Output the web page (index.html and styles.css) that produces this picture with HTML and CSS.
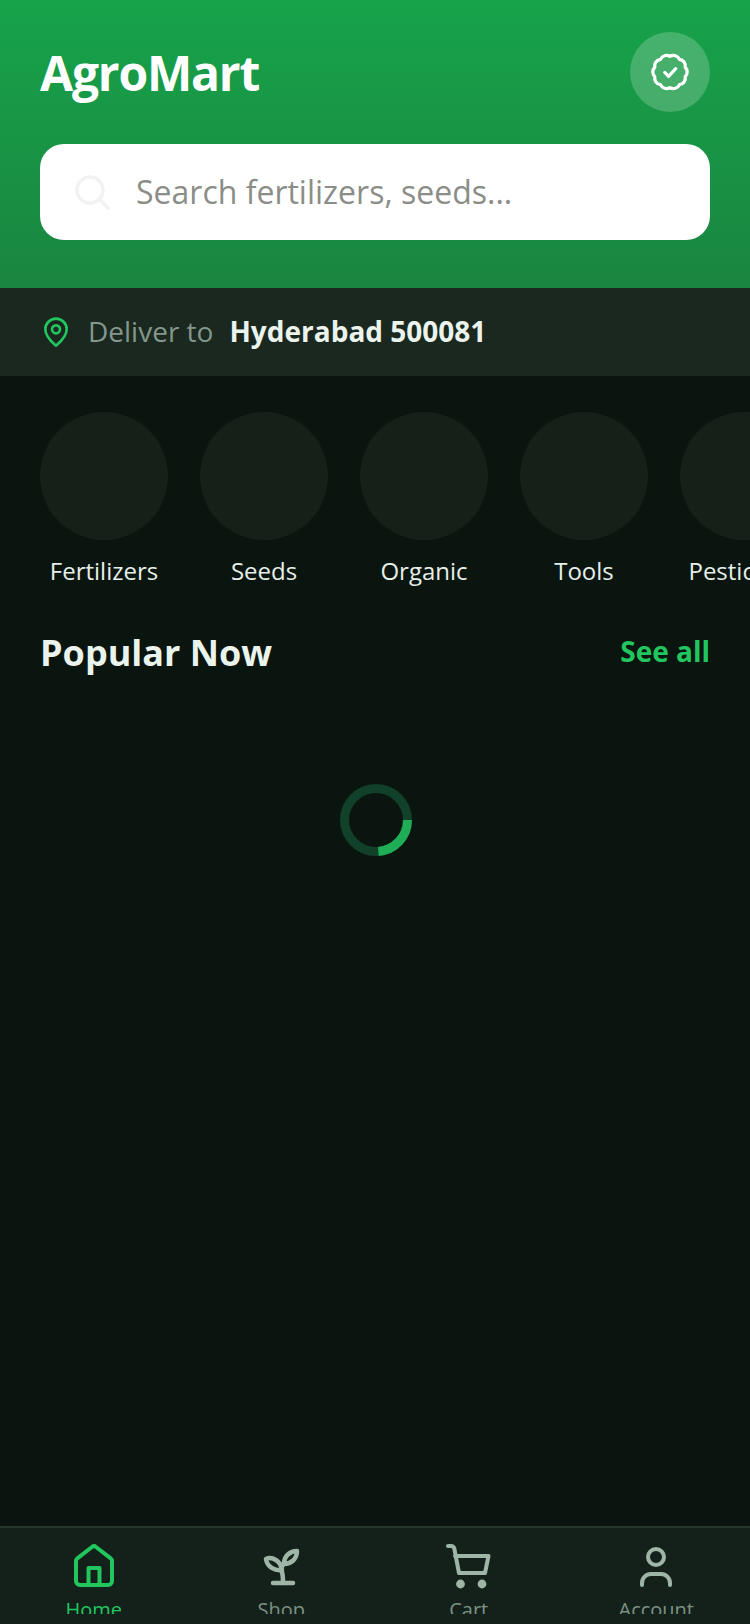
FILE: index.html
```html
<!DOCTYPE html>
<html lang="en">
<head>
  <meta charset="UTF-8" />
  <meta name="viewport" content="width=device-width, initial-scale=1.0" />
  <title>AgroMart</title>
  <link rel="stylesheet" href="styles.css">
</head>
<body>
  <div class="app">
    <!-- Header -->
    <div class="header">
      <div class="header-top">
        <div class="logo">AgroMart</div>
        <div class="badge-btn">
          <svg class="badge-icon" viewBox="0 0 40 40" fill="none" stroke="#fff" stroke-width="3.4" stroke-linecap="round" stroke-linejoin="round">
            <path d="M20 3.5A7 7 0 0 1 30 6.7A7 7 0 0 1 36 15A7 7 0 0 1 36 25A7 7 0 0 1 30 33.3A7 7 0 0 1 20 36.5A7 7 0 0 1 10 33.3A7 7 0 0 1 4 25A7 7 0 0 1 4 15A7 7 0 0 1 10 6.7A7 7 0 0 1 20 3.5Z" />
            <path d="M14.5 20.5l4 4 7.5-8" />
          </svg>
        </div>
      </div>
      <div class="search-box">
        <svg class="search-icon" viewBox="0 0 40 40" fill="none" stroke="#f0f3f1" stroke-width="3.4" stroke-linecap="round">
          <circle cx="18" cy="18" r="13" />
          <path d="M28 28l8 8" />
        </svg>
        <span class="search-text">Search fertilizers, seeds...</span>
      </div>
    </div>

    <!-- Delivery -->
    <div class="deliver-bar">
      <svg class="pin-icon" viewBox="0 0 24 24" fill="none" stroke="#22c55e" stroke-width="2" stroke-linecap="round" stroke-linejoin="round">
        <path d="M20 10c0 4.993-5.539 10.193-7.399 11.799a1 1 0 0 1-1.202 0C9.539 20.193 4 14.993 4 10a8 8 0 0 1 16 0" />
        <circle cx="12" cy="10" r="3" />
      </svg>
      <span class="deliver-label">Deliver to</span>
      <span class="deliver-place">Hyderabad 500081</span>
    </div>

    <div class="content">
      <!-- Categories -->
      <div class="categories">
        <div class="category"><div class="category-circle"></div><div class="category-name">Fertilizers</div></div>
        <div class="category"><div class="category-circle"></div><div class="category-name">Seeds</div></div>
        <div class="category"><div class="category-circle"></div><div class="category-name">Organic</div></div>
        <div class="category"><div class="category-circle"></div><div class="category-name">Tools</div></div>
        <div class="category"><div class="category-circle"></div><div class="category-name">Pesticides</div></div>
      </div>

      <!-- Popular -->
      <div class="section-head">
        <div class="section-title">Popular Now</div>
        <div class="see-all">See all</div>
      </div>

      <div class="loader">
        <svg class="spinner" viewBox="0 0 72 72" fill="none" stroke-width="9">
          <circle cx="36" cy="36" r="31.5" stroke="#12412a" />
          <circle cx="36" cy="36" r="31.5" stroke="#1fae56" stroke-dasharray="47 151" />
        </svg>
      </div>
    </div>

    <!-- Tab Bar -->
    <div class="tab-bar">
      <div class="tab-item active">
        <svg class="tab-icon" viewBox="0 0 48 48" fill="none" stroke="currentColor" stroke-width="4" stroke-linecap="round" stroke-linejoin="round">
          <path d="M6 19a3 3 0 0 1 1-2.300L22 5a3 3 0 0 1 4 0l15 11.700a3 3 0 0 1 1 2.300V39a4 4 0 0 1-4 4H10a4 4 0 0 1-4-4Z" />
          <path d="M18.500 43V26h11v17" />
        </svg>
        <div class="tab-label">Home</div>
      </div>
      <div class="tab-item">
        <svg class="tab-icon" viewBox="0 0 48 48" fill="none" stroke="currentColor" stroke-width="4.500" stroke-linecap="round" stroke-linejoin="round">
          <path d="M16 41h20" />
          <path d="M26 41c0-6 0-9-1.500-12.500C23 25 25 24 27 22" />
          <path d="M9 17c6-3 15 2 16 11c-7 1-15-3-16-11Z" />
          <path d="M40 9c-7 0-13 5-13 13c7 0 13-5 13-13Z" />
        </svg>
        <div class="tab-label">Shop</div>
      </div>
      <div class="tab-item">
        <svg class="tab-icon" viewBox="0 0 48 48" fill="none" stroke="currentColor" stroke-width="4" stroke-linecap="round" stroke-linejoin="round">
          <path d="M3 4h3c2 0 3 1 3.400 3L14 31h26l3.500-17H10" />
          <circle cx="15.500" cy="42" r="2.400" fill="currentColor" />
          <circle cx="37" cy="42" r="2.400" fill="currentColor" />
        </svg>
        <div class="tab-label">Cart</div>
      </div>
      <div class="tab-item">
        <svg class="tab-icon" viewBox="0 0 48 48" fill="none" stroke="currentColor" stroke-width="4" stroke-linecap="round" stroke-linejoin="round">
          <circle cx="24" cy="15" r="8" />
          <path d="M10 43v-2a9 9 0 0 1 9-9h10a9 9 0 0 1 9 9v2" />
        </svg>
        <div class="tab-label">Account</div>
      </div>
    </div>
  </div>
</body>
</html>
```

FILE: styles.css
```css
html, body {
  margin: 0;
  padding: 0;
  background: #0b150f;
  font-family: 'Open Sans', sans-serif;
}

.app {
  width: 750px;
  height: 1624px;
  display: flex;
  flex-direction: column;
  overflow: hidden;
}

.header {
  height: 288px;
  box-sizing: border-box;
  padding: 32px 40px 0 40px;
  background: linear-gradient(180deg, #17a34a, #1a8540);
}

.header-top {
  display: flex;
  justify-content: space-between;
  align-items: center;
  margin-bottom: 32px;
}

.logo {
  font-size: 48px;
  font-weight: 700;
  color: #fff;
  letter-spacing: -1.2px;
}

.badge-btn {
  width: 80px;
  height: 80px;
  border-radius: 50%;
  background: rgba(255, 255, 255, 0.2);
  display: flex;
  align-items: center;
  justify-content: center;
}

.badge-icon {
  width: 38px;
  height: 38px;
}

.search-box {
  height: 96px;
  box-sizing: border-box;
  padding: 0 32px;
  border-radius: 24px;
  background: #fff;
  display: flex;
  align-items: center;
  gap: 24px;
}

.search-icon {
  width: 40px;
  height: 40px;
}

.search-text {
  font-size: 32px;
  color: #8b8d87;
  padding-bottom: 1px;
}

.deliver-bar {
  height: 88px;
  box-sizing: border-box;
  padding: 0 40px;
  background: #1a2820;
  display: flex;
  align-items: center;
}

.pin-icon {
  width: 32px;
  height: 32px;
  margin-right: 16px;
}

.deliver-label {
  font-size: 28px;
  color: #84978c;
  margin-right: 16px;
  padding-bottom: 2px;
}

.deliver-place {
  font-size: 28px;
  font-weight: 700;
  color: #eaf3ec;
  padding-bottom: 2px;
}

.content {
  flex: 1;
}

.categories {
  display: flex;
  gap: 32px;
  padding: 36px 0 0 40px;
}

.category {
  flex: 0 0 128px;
  display: flex;
  flex-direction: column;
  align-items: center;
}

.category-circle {
  width: 128px;
  height: 128px;
  border-radius: 50%;
  background: #152019;
}

.category-name {
  margin-top: 13px;
  font-size: 24px;
  line-height: 36px;
  color: #e6efe9;
  white-space: nowrap;
}

.section-head {
  display: flex;
  justify-content: space-between;
  align-items: center;
  padding: 0 40px;
  margin-top: 39px;
}

.section-title {
  font-size: 36px;
  font-weight: 700;
  color: #eaf3ec;
}

.see-all {
  font-size: 28px;
  font-weight: 700;
  color: #22c55e;
  padding-bottom: 4px;
}

.loader {
  display: flex;
  justify-content: center;
  margin-top: 107px;
  padding-left: 2px;
}

.spinner {
  width: 72px;
  height: 72px;
}

.tab-bar {
  height: 98px;
  box-sizing: border-box;
  border-top: 2px solid #24382c;
  background: #14211a;
  display: flex;
}

.tab-item {
  flex: 1;
  display: flex;
  flex-direction: column;
  align-items: center;
  padding-top: 14px;
  color: #9fb5a8;
}

.tab-item.active {
  color: #22c55e;
}

.tab-icon {
  width: 48px;
  height: 48px;
}

.tab-label {
  height: 18px;
  overflow: hidden;
  margin-top: 6px;
  font-size: 20px;
  line-height: 27px;
  color: #7c9184;
}

.tab-item.active .tab-label {
  color: #22c55e;
}
```
